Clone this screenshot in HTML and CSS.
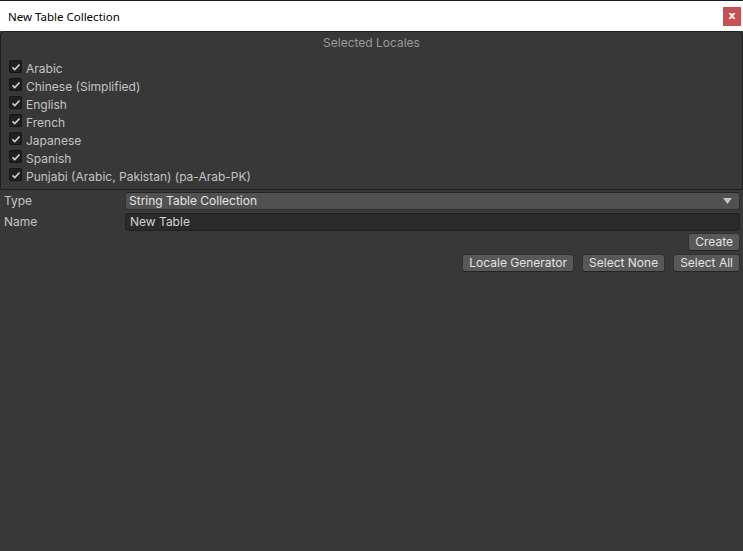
FILE: index.html
```html
<!DOCTYPE html>
<html>
<head>
<meta charset="utf-8">
<link rel="stylesheet" href="styles.css">
</head>
<body>
<div class="window">
  <div class="titlebar">
    <span class="title">New Table Collection</span>
    <span class="close">x</span>
  </div>
  <div class="content">
    <div class="panel">
      <div class="panel-header">Selected Locales</div>
      <ul class="locales">
        <li><span class="check"><svg viewBox="0 0 12 12" width="12" height="12"><path d="M2.5 6.3 L4.8 8.5 L9.5 3.5" fill="none" stroke="#d2d2d2" stroke-width="1.6"/></svg></span>Arabic</li>
        <li><span class="check"><svg viewBox="0 0 12 12" width="12" height="12"><path d="M2.5 6.3 L4.8 8.5 L9.5 3.5" fill="none" stroke="#d2d2d2" stroke-width="1.6"/></svg></span>Chinese (Simplified)</li>
        <li><span class="check"><svg viewBox="0 0 12 12" width="12" height="12"><path d="M2.5 6.3 L4.8 8.5 L9.5 3.5" fill="none" stroke="#d2d2d2" stroke-width="1.6"/></svg></span>English</li>
        <li><span class="check"><svg viewBox="0 0 12 12" width="12" height="12"><path d="M2.5 6.3 L4.8 8.5 L9.5 3.5" fill="none" stroke="#d2d2d2" stroke-width="1.6"/></svg></span>French</li>
        <li><span class="check"><svg viewBox="0 0 12 12" width="12" height="12"><path d="M2.5 6.3 L4.8 8.5 L9.5 3.5" fill="none" stroke="#d2d2d2" stroke-width="1.6"/></svg></span>Japanese</li>
        <li><span class="check"><svg viewBox="0 0 12 12" width="12" height="12"><path d="M2.5 6.3 L4.8 8.5 L9.5 3.5" fill="none" stroke="#d2d2d2" stroke-width="1.6"/></svg></span>Spanish</li>
        <li><span class="check"><svg viewBox="0 0 12 12" width="12" height="12"><path d="M2.5 6.3 L4.8 8.5 L9.5 3.5" fill="none" stroke="#d2d2d2" stroke-width="1.6"/></svg></span>Punjabi (Arabic, Pakistan) (pa-Arab-PK)</li>
      </ul>
    </div>
    <div class="field-row">
      <span class="label">Type</span>
      <div class="dropdown">String Table Collection<svg class="arrow" viewBox="0 0 9 6" width="9" height="6"><path d="M0 0 H9 L4.5 6 Z" fill="#c4c4c4"/></svg></div>
    </div>
    <div class="field-row">
      <span class="label">Name</span>
      <div class="textfield">New Table</div>
    </div>
    <div class="btn-row first">
      <button class="btn">Create</button>
    </div>
    <div class="btn-row">
      <button class="btn">Locale Generator</button>
      <button class="btn">Select None</button>
      <button class="btn">Select All</button>
    </div>
  </div>
</div>
</body>
</html>
```
FILE: styles.css
```css
html, body {
  margin: 0;
  padding: 0;
  width: 743px;
  height: 551px;
  overflow: hidden;
  background: #383838;
}
.window {
  display: flex;
  flex-direction: column;
  height: 551px;
}
.titlebar {
  height: 31px;
  background: #ffffff;
  border-top: 1px solid #1c1c1c;
  box-sizing: border-box;
  display: flex;
  align-items: center;
  justify-content: space-between;
  padding: 0 2px 0 8px;
  font-family: "Noto Sans", "Open Sans", sans-serif;
  font-size: 11.5px;
  color: #000;
}
.close {
  width: 18px;
  height: 19px;
  background: #c75050;
  color: #fff;
  font-family: "DejaVu Sans", sans-serif;
  font-weight: bold;
  font-size: 11px;
  display: flex;
  align-items: center;
  justify-content: center;
  line-height: 1;
  padding-bottom: 2px;
  box-sizing: border-box;
}
.content {
  flex: 1;
  font-family: Inter, "Noto Sans", sans-serif;
  font-size: 12px;
  color: #c4c4c4;
}
.panel {
  border: 1px solid #1e1e1e;
  border-radius: 5px 5px 0 0;
  background: #383838;
  padding-bottom: 4px;
}
.panel-header {
  text-align: center;
  color: #999999;
  height: 21px;
  line-height: 21px;
}
.locales {
  list-style: none;
  margin: 0;
  padding: 6px 0 0 8px;
}
.locales li {
  display: flex;
  align-items: center;
  height: 18px;
  gap: 4px;
}
.check {
  width: 13px;
  height: 13px;
  background: #202020;
  border: 1px solid #151515;
  border-radius: 2px;
  box-sizing: border-box;
  display: flex;
  align-items: center;
  justify-content: center;
  margin-top: -3px;
}
.check svg {
  flex: none;
}
.field-row {
  display: flex;
  align-items: center;
  height: 21px;
  padding: 0 3px 0 4px;
}
.field-row:first-of-type {
  margin-top: 1px;
}
.label {
  width: 121px;
  flex: none;
}
.dropdown {
  flex: 1;
  height: 18px;
  box-sizing: border-box;
  background: #515151;
  border: 1px solid #303030;
  border-top-color: #242424;
  border-radius: 3px;
  padding: 0 7px 0 3px;
  display: flex;
  align-items: center;
  justify-content: space-between;
  color: #e4e4e4;
}
.textfield {
  flex: 1;
  height: 18px;
  box-sizing: border-box;
  background: #2a2a2a;
  border: 1px solid #212121;
  border-radius: 3px;
  padding: 0 4px;
  display: flex;
  align-items: center;
  color: #d2d2d2;
}
.btn-row {
  display: flex;
  justify-content: flex-end;
  gap: 8px;
  padding: 0 3px 0 0;
  height: 21px;
  align-items: center;
}
.btn-row.first {
  margin-top: -1px;
}
.btn {
  font-family: Inter, "Noto Sans", sans-serif;
  font-size: 12px;
  color: #e4e4e4;
  background: #585858;
  border: 1px solid #303030;
  border-bottom-color: #242424;
  border-radius: 3px;
  height: 18px;
  padding: 0 6px;
  line-height: 16px;
  margin: 0;
}
```
